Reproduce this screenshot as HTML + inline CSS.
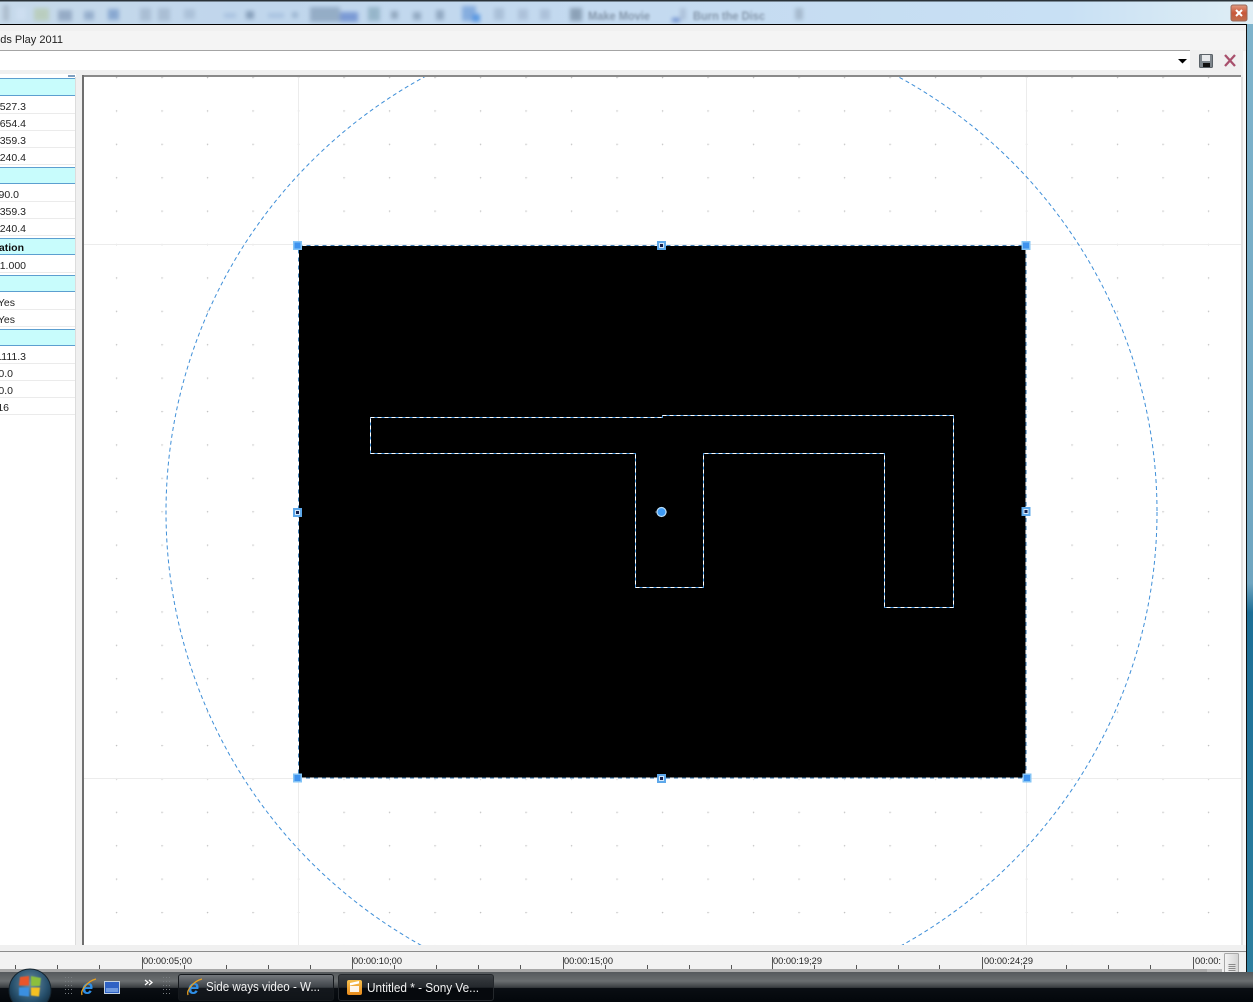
<!DOCTYPE html>
<html><head><meta charset="utf-8">
<style>
html,body{margin:0;padding:0;background:#fff;width:1253px;height:1002px;overflow:hidden}
svg{display:block;position:absolute;left:0;top:0}
text{font-family:"Liberation Sans",sans-serif;font-size:11px;fill:#222}
.w{fill:#f2f2f2;font-size:12.5px}
.v text{font-size:10.5px;text-anchor:end}
.t text{font-size:9.6px}
</style></head><body>
<svg width="1253" height="1002" viewBox="0 0 1253 1002" xmlns="http://www.w3.org/2000/svg">
<defs>
<linearGradient id="aero" x1="0" x2="1" y1="0" y2="0">
<stop offset="0" stop-color="#c6d9ea"/><stop offset=".2" stop-color="#c0d6ec"/><stop offset=".5" stop-color="#c4daf0"/><stop offset=".85" stop-color="#c8e0f4"/><stop offset="1" stop-color="#dfeef5"/>
</linearGradient>
<linearGradient id="tb" x1="0" x2="0" y1="0" y2="1">
<stop offset="0" stop-color="#55595c"/><stop offset=".3" stop-color="#6a6e70"/><stop offset=".52" stop-color="#383c3f"/><stop offset=".54" stop-color="#0a0e13"/><stop offset="1" stop-color="#03070b"/>
</linearGradient>
<linearGradient id="btn" x1="0" x2="0" y1="0" y2="1">
<stop offset="0" stop-color="#777b80"/><stop offset=".5" stop-color="#3c4146"/><stop offset=".52" stop-color="#14181d"/><stop offset="1" stop-color="#101418"/>
</linearGradient>
<linearGradient id="btn2" x1="0" x2="0" y1="0" y2="1">
<stop offset="0" stop-color="#3c4044"/><stop offset=".5" stop-color="#23272b"/><stop offset=".52" stop-color="#06090d"/><stop offset="1" stop-color="#06090d"/>
</linearGradient>
<linearGradient id="edge" x1="0" x2="0" y1="0" y2="1">
<stop offset="0" stop-color="#7fb4cc"/><stop offset=".6" stop-color="#6fa5c0"/><stop offset=".63" stop-color="#1d6f96"/><stop offset="1" stop-color="#2e7f9f"/>
</linearGradient>
<linearGradient id="close" x1="0" x2="0" y1="0" y2="1">
<stop offset="0" stop-color="#e09a80"/><stop offset=".5" stop-color="#c8583a"/><stop offset="1" stop-color="#c07050"/>
</linearGradient>
<radialGradient id="orb" cx=".5" cy=".35" r=".7">
<stop offset="0" stop-color="#6d8fa6"/><stop offset=".6" stop-color="#27506c"/><stop offset="1" stop-color="#0b2030"/>
</radialGradient>
<linearGradient id="son" x1="0" x2="0" y1="0" y2="1">
<stop offset="0" stop-color="#f6c04e"/><stop offset="1" stop-color="#e78a1c"/>
</linearGradient>
<linearGradient id="thumb" x1="0" x2="1" y1="0" y2="0">
<stop offset="0" stop-color="#f4f4f4"/><stop offset="1" stop-color="#d4d4d4"/>
</linearGradient>
<filter id="b" x="-40%" y="-40%" width="180%" height="180%"><feGaussianBlur stdDeviation="2.2"/></filter>
<filter id="b2" x="-10%" y="-40%" width="120%" height="180%"><feGaussianBlur stdDeviation="1.3"/></filter>
<filter id="s" x="-10%" y="-10%" width="120%" height="120%"><feGaussianBlur stdDeviation="0.5"/></filter>
<pattern id="grid" x="298" y="244" width="45.5" height="33.4" patternUnits="userSpaceOnUse">
<rect x="0" y="0" width="1" height="1" fill="#c2c2c2"/>
<rect x="0" y="1" width="1" height="1" fill="#eeeeee"/><rect x="1" y="0" width="1" height="1" fill="#eeeeee"/>
<rect x="45" y="0" width="1" height="1" fill="#eeeeee"/><rect x="0" y="33" width="1" height="1" fill="#eeeeee"/>
</pattern>
<clipPath id="cv"><rect x="84" y="77" width="1157" height="868"/></clipPath>
<clipPath id="tl"><rect x="0" y="952" width="1222" height="20"/></clipPath>
<clipPath id="o"><circle cx="30" cy="990" r="21"/></clipPath>
</defs>

<!-- window edge right -->
<rect x="1247" y="0" width="6" height="972" fill="url(#edge)"/>
<!-- aero title/tool -->
<rect x="0" y="0" width="1253" height="24" fill="url(#aero)"/>
<rect x="0" y="0" width="1253" height="1.5" fill="#2a3238"/>
<g filter="url(#b)" opacity=".85">
<rect x="3" y="5" width="6" height="16" fill="#a8b8c8"/>
<rect x="16" y="8" width="10" height="12" fill="#cfe0f2"/>
<rect x="34" y="8" width="15" height="13" fill="#b8ccb8"/>
<rect x="58" y="10" width="14" height="11" fill="#8ea4c0"/>
<rect x="84" y="11" width="10" height="9" fill="#8fa8c8"/>
<rect x="108" y="9" width="11" height="11" fill="#7fa0cc"/>
<rect x="140" y="8" width="11" height="13" fill="#a6bad0"/>
<rect x="158" y="8" width="12" height="13" fill="#a6bad0"/>
<rect x="184" y="9" width="11" height="10" fill="#a8bed6"/>
<rect x="224" y="13" width="12" height="5" fill="#a6c0de"/>
<rect x="246" y="11" width="8" height="8" fill="#7f98b4"/>
<rect x="268" y="13" width="16" height="5" fill="#a6c0de"/>
<rect x="292" y="12" width="6" height="6" fill="#96b0cc"/>
<rect x="310" y="7" width="30" height="15" fill="#8da6c0"/>
<rect x="340" y="12" width="18" height="10" fill="#6f90d0"/>
<rect x="368" y="7" width="12" height="14" fill="#8fb0c4"/>
<rect x="391" y="11" width="7" height="8" fill="#8aa0b8"/>
<rect x="413" y="12" width="8" height="8" fill="#8aa2bc"/>
<rect x="436" y="10" width="8" height="10" fill="#8aa2bc"/>
<rect x="462" y="6" width="14" height="15" fill="#7ca6dc"/>
<rect x="472" y="14" width="8" height="8" fill="#4a8ee0"/>
<rect x="494" y="8" width="10" height="12" fill="#a6bcd4"/>
<rect x="518" y="9" width="10" height="11" fill="#a9bdd6"/>
<rect x="540" y="9" width="10" height="11" fill="#a9bdd6"/>
<rect x="570" y="8" width="12" height="13" fill="#8298ae"/>
<rect x="672" y="18" width="8" height="4" fill="#5c80c8"/>
<rect x="680" y="8" width="6" height="12" fill="#a9bdd6"/>
<rect x="795" y="8" width="8" height="12" fill="#a0b4c8"/>
</g>
<g filter="url(#b2)">
<text x="588" y="20" textLength="62" lengthAdjust="spacingAndGlyphs" style="font-size:12px;font-weight:bold;fill:#8496aa">Make Movie</text>
<text x="693" y="20" textLength="72" lengthAdjust="spacingAndGlyphs" style="font-size:12px;font-weight:bold;fill:#8496aa">Burn the Disc</text>
</g>
<!-- close -->
<rect x="1231" y="5" width="16" height="16" rx="2" fill="url(#close)" stroke="#9a6a5a"/>
<path d="M1236 10l6 6m0-6l-6 6" stroke="#fff" stroke-width="2"/>

<!-- window -->
<rect x="0" y="24" width="1246" height="948" fill="#f0f0f0"/>
<rect x="0" y="24" width="1247" height="1" fill="#000"/>
<rect x="1246" y="24" width="1" height="948" fill="#111"/>
<rect x="0" y="31" width="1246" height="19" fill="#f4f4f4"/>
<text x="63" y="43" text-anchor="end" style="font-size:11px">Worlds Play 2011</text>
<rect x="0" y="50" width="1190" height="1" fill="#a4a4a4"/>
<rect x="0" y="51" width="1190" height="19" fill="#fff"/>
<path d="M1178 59h9l-4.500 4.500z" fill="#000"/>
<!-- floppy -->
<rect x="1199.500" y="54.500" width="13" height="13" rx="1" fill="#7e868c" stroke="#5b6268"/>
<rect x="1202" y="55" width="8" height="6" fill="#e8eaec"/>
<rect x="1203" y="63" width="7" height="4" fill="#111"/>
<!-- red X -->
<path d="M1225 55l10 11m0-11l-10 11" stroke="#a8506c" stroke-width="2.300"/>

<!-- left panel -->
<rect x="0" y="74" width="76" height="872" fill="#fff"/>
<rect x="68" y="75" width="7" height="2" fill="#7f9fc0"/>
<rect x="75" y="77" width="1" height="869" fill="#dcdcdc"/>
<rect x="0" y="946" width="68" height="1" fill="#c4c4c4"/>
<g fill="#c8fcfc">
<rect x="0" y="79" width="75" height="17"/>
<rect x="0" y="167" width="75" height="17"/>
<rect x="0" y="238" width="75" height="17"/>
<rect x="0" y="275" width="75" height="17"/>
<rect x="0" y="329" width="75" height="17"/>
</g>
<g fill="#5c9fd0">
<rect x="0" y="78" width="75" height="1"/><rect x="0" y="95" width="75" height="1"/>
<rect x="0" y="167" width="75" height="1"/><rect x="0" y="183" width="75" height="1"/>
<rect x="0" y="238" width="75" height="1"/><rect x="0" y="254" width="75" height="1"/>
<rect x="0" y="275" width="75" height="1"/><rect x="0" y="291" width="75" height="1"/>
<rect x="0" y="329" width="75" height="1"/><rect x="0" y="345" width="75" height="1"/>
</g>
<g fill="#ebebeb">
<rect x="0" y="113" width="75" height="1"/><rect x="0" y="130" width="75" height="1"/><rect x="0" y="147" width="75" height="1"/><rect x="0" y="164" width="75" height="1"/>
<rect x="0" y="201" width="75" height="1"/><rect x="0" y="218" width="75" height="1"/><rect x="0" y="235" width="75" height="1"/>
<rect x="0" y="272" width="75" height="1"/>
<rect x="0" y="309" width="75" height="1"/><rect x="0" y="326" width="75" height="1"/>
<rect x="0" y="363" width="75" height="1"/><rect x="0" y="380" width="75" height="1"/><rect x="0" y="397" width="75" height="1"/><rect x="0" y="414" width="75" height="1"/>
</g>
<g class="v">
<text x="26" y="110">1527.3</text>
<text x="26" y="127">1654.4</text>
<text x="26" y="144">1359.3</text>
<text x="26" y="161">1240.4</text>
<text x="19" y="198">-90.0</text>
<text x="26" y="215">1359.3</text>
<text x="26" y="232">1240.4</text>
<text x="24" y="251" style="font-weight:bold;font-size:10.5px;fill:#111">Rotation</text>
<text x="26" y="269">1.000</text>
<text x="15" y="306">Yes</text>
<text x="15" y="323">Yes</text>
<text x="26" y="360">1111.3</text>
<text x="13" y="377">0.0</text>
<text x="13" y="394">0.0</text>
<text x="9" y="411">16</text>
</g>

<!-- canvas -->
<rect x="82" y="75" width="1159" height="2" fill="#8a8a8a"/>
<rect x="82" y="75" width="2" height="871" fill="#6f6f6f"/>
<rect x="84" y="77" width="1157" height="868" fill="#fff"/>
<rect x="1241" y="77" width="2" height="868" fill="#e2e2e2"/>
<rect x="1243" y="51" width="3" height="921" fill="#fafafa"/>
<rect x="84" y="77" width="1157" height="868" fill="url(#grid)"/>
<g fill="#ececec">
<rect x="84" y="244" width="1157" height="1"/>
<rect x="84" y="778" width="1157" height="1"/>
<rect x="298" y="77" width="1" height="868"/>
<rect x="1026" y="77" width="1" height="868"/>
</g>
<g clip-path="url(#cv)">
<circle cx="661.500" cy="512" r="495.500" fill="none" stroke="#3f8fd8" stroke-width="1" stroke-dasharray="4 3"/>
</g>
<rect x="298" y="245" width="728" height="533" fill="#000"/>
<rect x="298.500" y="245.500" width="727.500" height="532.500" fill="none" stroke="#fff" stroke-width="1"/>
<rect x="298.500" y="245.500" width="727.500" height="532.500" fill="none" stroke="#3f7fb8" stroke-width="1" stroke-dasharray="4 4"/>
<!-- T shape -->
<path d="M370.500 417.500H662.500V415.500H953.500V607.500H884.500V453.500H703.500V587.500H635.500V453.500H370.500Z" fill="none" stroke="#3f8fd8" stroke-width="1"/>
<path d="M370.500 417.500H662.500V415.500H953.500V607.500H884.500V453.500H703.500V587.500H635.500V453.500H370.500Z" fill="none" stroke="#fff" stroke-width="1" stroke-dasharray="4 3"/>
<!-- corner handles -->
<g fill="#3f93ee" stroke="#84c4f6" stroke-width="1.500">
<rect x="293.750" y="241.750" width="7.500" height="7.500"/>
<rect x="1022.250" y="241.750" width="7.500" height="7.500"/>
<rect x="293.750" y="774.250" width="7.500" height="7.500"/>
<rect x="1023.250" y="774.250" width="7.500" height="7.500"/>
</g>
<!-- mid handles: blue frame, pale ring, dark centre -->
<g fill="#5ea8ea">
<rect x="657" y="241" width="9" height="9"/>
<rect x="293" y="508" width="9" height="9"/>
<rect x="1021.500" y="507" width="9" height="9"/>
<rect x="657" y="774" width="9" height="9"/>
</g>
<g fill="#d4e8fa">
<rect x="659" y="243" width="5" height="5"/>
<rect x="295" y="510" width="5" height="5"/>
<rect x="1023.500" y="509" width="5" height="5"/>
<rect x="659" y="776" width="5" height="5"/>
</g>
<g fill="#14204e">
<rect x="660" y="244" width="3" height="3"/>
<rect x="296" y="511" width="3" height="3"/>
<rect x="1024.500" y="510" width="3" height="3"/>
<rect x="660" y="777" width="3" height="3"/>
</g>
<rect x="655" y="511" width="12" height="2" fill="#333"/>
<circle cx="661.500" cy="512" r="4.500" fill="#3f9bf5" stroke="#b8dcf8" stroke-width="1.200"/>

<!-- timeline -->
<rect x="0" y="945" width="1246" height="6" fill="#f0f0f0"/>
<rect x="0" y="951" width="1246" height="1" fill="#8c8c8c"/>
<rect x="0" y="952" width="1246" height="20" fill="#f2f2f2"/>
<rect x="0" y="969" width="1222" height="3" fill="#a8a8a8"/>
<g clip-path="url(#tl)" fill="#555">
<rect x="15" y="965" width="1" height="4"/><rect x="57" y="965" width="1" height="4"/><rect x="99" y="965" width="1" height="4"/>
<rect x="142" y="957" width="1" height="12"/>
<rect x="184" y="965" width="1" height="4"/><rect x="226" y="965" width="1" height="4"/><rect x="268" y="965" width="1" height="4"/><rect x="310" y="965" width="1" height="4"/>
<rect x="352" y="957" width="1" height="12"/>
<rect x="394" y="965" width="1" height="4"/><rect x="436" y="965" width="1" height="4"/><rect x="478" y="965" width="1" height="4"/><rect x="520" y="965" width="1" height="4"/>
<rect x="563" y="957" width="1" height="12"/>
<rect x="605" y="965" width="1" height="4"/><rect x="647" y="965" width="1" height="4"/><rect x="689" y="965" width="1" height="4"/><rect x="731" y="965" width="1" height="4"/>
<rect x="772" y="957" width="1" height="12"/>
<rect x="814" y="965" width="1" height="4"/><rect x="856" y="965" width="1" height="4"/><rect x="898" y="965" width="1" height="4"/><rect x="939" y="965" width="1" height="4"/>
<rect x="982" y="957" width="1" height="12"/>
<rect x="1024" y="965" width="1" height="4"/><rect x="1066" y="965" width="1" height="4"/><rect x="1108" y="965" width="1" height="4"/><rect x="1150" y="965" width="1" height="4"/>
<rect x="1193" y="957" width="1" height="12"/>
</g>
<g class="t">
<text x="143" y="964" textLength="49" lengthAdjust="spacingAndGlyphs">00:00:05;00</text>
<text x="353" y="964" textLength="49" lengthAdjust="spacingAndGlyphs">00:00:10;00</text>
<text x="564" y="964" textLength="49" lengthAdjust="spacingAndGlyphs">00:00:15;00</text>
<text x="773" y="964" textLength="49" lengthAdjust="spacingAndGlyphs">00:00:19;29</text>
<text x="984" y="964" textLength="49" lengthAdjust="spacingAndGlyphs">00:00:24;29</text>
<text x="1195" y="964" textLength="26" lengthAdjust="spacingAndGlyphs">00:00:</text>
</g>
<rect x="1222" y="952" width="24" height="20" fill="#f0f0f0"/>
<rect x="1207" y="969" width="15" height="3" fill="#bcbcbc"/>
<rect x="1224.500" y="953.500" width="14" height="19" rx="1" fill="url(#thumb)" stroke="#a8a8a8"/>
<path d="M1228.500 964.500h7M1228.500 966.500h7M1228.500 968.500h7M1228.500 970.500h7" stroke="#8a8a8a" stroke-width="1"/>

<!-- taskbar -->
<rect x="0" y="972" width="1253" height="30" fill="url(#tb)"/>
<circle cx="30" cy="990" r="21" fill="url(#orb)" stroke="#16242e" stroke-width="1"/>
<g clip-path="url(#o)" filter="url(#s)">
<path d="M20 977l9-1v9.500h-10z" fill="#e8542a"/>
<path d="M31 976l10 2-1 8h-9z" fill="#8cbf3c"/>
<path d="M19 987.500h10v9l-10-1z" fill="#3a8fe0"/>
<path d="M31 987.500h9l-1 9-8-1z" fill="#f4c020"/>
</g>
<!-- grippers -->
<g fill="#777c80">
<rect x="65" y="977" width="1" height="1"/><rect x="68" y="977" width="1" height="1"/><rect x="71" y="977" width="1" height="1"/>
<rect x="65" y="981" width="1" height="1"/><rect x="68" y="981" width="1" height="1"/><rect x="71" y="981" width="1" height="1"/>
<rect x="65" y="985" width="1" height="1"/><rect x="68" y="985" width="1" height="1"/><rect x="71" y="985" width="1" height="1"/>
<rect x="65" y="989" width="1" height="1"/><rect x="68" y="989" width="1" height="1"/><rect x="71" y="989" width="1" height="1"/>
<rect x="65" y="993" width="1" height="1"/><rect x="68" y="993" width="1" height="1"/><rect x="71" y="993" width="1" height="1"/>
<rect x="163" y="977" width="1" height="1"/><rect x="166" y="977" width="1" height="1"/><rect x="169" y="977" width="1" height="1"/>
<rect x="163" y="981" width="1" height="1"/><rect x="166" y="981" width="1" height="1"/><rect x="169" y="981" width="1" height="1"/>
<rect x="163" y="985" width="1" height="1"/><rect x="166" y="985" width="1" height="1"/><rect x="169" y="985" width="1" height="1"/>
<rect x="163" y="989" width="1" height="1"/><rect x="166" y="989" width="1" height="1"/><rect x="169" y="989" width="1" height="1"/>
<rect x="163" y="993" width="1" height="1"/><rect x="166" y="993" width="1" height="1"/><rect x="169" y="993" width="1" height="1"/>
</g>
<!-- IE -->
<text x="82" y="994" style="font-style:italic;font-weight:bold;font-size:20px;fill:#2f8fe6">e</text>
<path d="M82 995C80 990 88 981 96 979" fill="none" stroke="#e8a020" stroke-width="1.300"/>
<!-- desktop -->
<rect x="104.500" y="981.500" width="15" height="12" fill="#2f62c4" stroke="#c4d2e0"/>
<rect x="106" y="988" width="12" height="4" fill="#6f9ae0"/>
<path d="M145 980l3 2.500-3 2.500M149 980l3 2.500-3 2.500" fill="none" stroke="#fff" stroke-width="1.300"/>
<!-- button 1 -->
<rect x="178.500" y="974.500" width="155" height="26" rx="2.500" fill="url(#btn)" stroke="#15191d"/>
<text x="188" y="994" style="font-style:italic;font-weight:bold;font-size:20px;fill:#2f8fe6">e</text>
<path d="M188 995C186 990 194 981 202 979" fill="none" stroke="#e8a020" stroke-width="1.300"/>
<text x="206" y="991" class="w" textLength="114" lengthAdjust="spacingAndGlyphs">Side ways video - W...</text>
<!-- button 2 -->
<rect x="338.500" y="974.500" width="155" height="26" rx="2.500" fill="url(#btn2)" stroke="#24282c"/>
<rect x="347" y="980" width="15" height="15" rx="2" fill="url(#son)"/>
<rect x="350" y="986" width="9" height="6" fill="#fff" opacity=".9"/>
<path d="M350 983l9-2v2.500l-9 2z" fill="#fff"/>
<text x="367" y="992" class="w" textLength="112" lengthAdjust="spacingAndGlyphs">Untitled * - Sony Ve...</text>
</svg>
</body></html>
